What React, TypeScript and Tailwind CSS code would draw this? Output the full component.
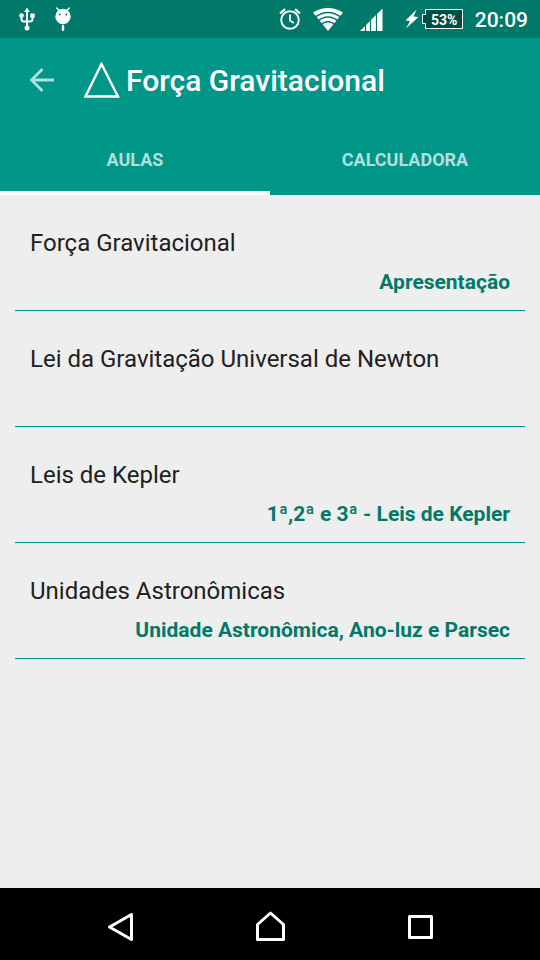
import React from "react";

type Lesson = { title: string; subtitle: string };

const lessons: Lesson[] = [
  { title: "Força Gravitacional", subtitle: "Apresentação" },
  { title: "Lei da Gravitação Universal de Newton", subtitle: "" },
  { title: "Leis de Kepler", subtitle: "1ª,2ª e 3ª - Leis de Kepler" },
  { title: "Unidades Astronômicas", subtitle: "Unidade Astronômica, Ano-luz e Parsec" },
];

function UsbIcon() {
  return (
    <svg width="16" height="24" viewBox="0 0 16 24" fill="none" stroke="#fff" strokeWidth="2" aria-hidden="true">
      <path d="M8 3V21M2.500 8V12Q2.500 14.500 5 14.500H11Q13.500 14.500 13.500 12V8" />
      <path d="M8 0.500L10.800 5H5.200Z" fill="#fff" stroke="none" />
      <circle cx="8" cy="21" r="2.500" fill="#fff" stroke="none" />
      <circle cx="2.500" cy="8.500" r="2.300" fill="#fff" stroke="none" />
      <rect x="11.300" y="6.500" width="4.400" height="4.200" fill="#fff" stroke="none" />
    </svg>
  );
}

function DroidIcon() {
  return (
    <svg width="16" height="24" viewBox="0 0 16 24" aria-hidden="true">
      <path d="M1.800 1L4.500 4M14.200 1L11.500 4" stroke="#fff" strokeWidth="1.500" strokeLinecap="round" />
      <circle cx="8" cy="9.500" r="7.700" fill="#fff" />
      <circle cx="4.700" cy="7.500" r="1" fill="#00796b" />
      <circle cx="11.300" cy="7.500" r="1" fill="#00796b" />
      <rect x="6.800" y="18" width="2.400" height="6" rx="1" fill="#fff" />
    </svg>
  );
}

function AlarmIcon() {
  return (
    <svg width="22" height="22" viewBox="0 0 22 22" fill="none" stroke="#fff" strokeWidth="1.900" aria-hidden="true">
      <circle cx="11" cy="12" r="8.800" />
      <path d="M11 6.500V12.500L14.800 15" />
      <path d="M1 5.300L6 1.200M21 5.300L16 1.200" strokeWidth="2.200" />
    </svg>
  );
}

function WifiIcon() {
  return (
    <svg width="30" height="24" viewBox="0 0 30 24" aria-hidden="true">
      <path d="M15 24L0 5.500Q15 -3.300 30 5.500Z" fill="#fff" />
      <g fill="none" stroke="#00796b" strokeWidth="1.600">
        <path d="M1.500 10.500Q15 0.500 28.500 10.500" />
        <path d="M4 14.500Q15 5.500 26 14.500" />
        <path d="M7 18.500Q15 11 23 18.500" />
      </g>
    </svg>
  );
}

function SignalIcon() {
  return (
    <svg width="23" height="23" viewBox="0 0 23 23" aria-hidden="true">
      <path d="M0 23L22.500 0.500V23Z" fill="#fff" />
      <path d="M5.500 14V23M10.500 9V23M16.500 4V23" stroke="#00796b" strokeWidth="1.200" />
    </svg>
  );
}

function Battery() {
  return (
    <div className="flex items-center">
      <svg width="14" height="20" viewBox="0 0 14 20" fill="#fff" aria-hidden="true">
        <path d="M11.500 0.500L0.500 11.500L5 12L1 19.500L13.500 8L8.500 7.500Z" />
      </svg>
      <div className="relative ml-[3px] flex h-5 w-[41px] items-center justify-center pl-1 text-[14px] font-bold leading-none">
        <svg className="absolute inset-0" width="41" height="20" viewBox="0 0 41 20" fill="#004d43" stroke="#fff" aria-hidden="true">
          <path d="M3.500 0.500H40.500V19.500H3.500V14.500H0.500V5.500H3.500Z" />
        </svg>
        <span className="relative pt-0.5">53%</span>
      </div>
    </div>
  );
}

function StatusBar() {
  return (
    <div className="flex h-[38px] items-center bg-[#00796b] pr-3 pl-[19px] text-white">
      <UsbIcon />
      <div className="ml-5">
        <DroidIcon />
      </div>
      <div className="ml-auto flex items-center">
        <AlarmIcon />
        <div className="ml-3">
          <WifiIcon />
        </div>
        <div className="ml-[17px]">
          <SignalIcon />
        </div>
        <div className="ml-[22px]">
          <Battery />
        </div>
        <span className="ml-3 pt-0.5 text-[21px] font-medium leading-6">20:09</span>
      </div>
    </div>
  );
}

function TabButton({ label, active }: { label: string; active: boolean }) {
  return (
    <button
      type="button"
      role="tab"
      aria-selected={active}
      className={
        "flex flex-1 items-center justify-center border-b-4 pt-1.5 text-[18px] font-bold text-[#b2dfdb] " +
        (active ? "border-white" : "border-transparent")
      }
    >
      {label}
    </button>
  );
}

export default function App() {
  return (
    <div className="flex min-h-screen flex-col bg-[#eeeeee] font-[Roboto,'Noto_Sans',sans-serif]">
      <StatusBar />
      <header className="bg-[#009688] text-white">
        <div className="flex h-[84px] items-center pl-7">
          <button type="button" aria-label="Voltar" className="flex size-7 items-center justify-center">
            <svg width="28" height="28" viewBox="0 0 28 28" fill="none" stroke="#b2dfdb" strokeWidth="2.800" aria-hidden="true">
              <path d="M26 14H4M14.500 3L3.500 14L14.500 25" />
            </svg>
          </button>
          <svg className="ml-7" width="36" height="36" viewBox="0 0 36 36" fill="none" stroke="#fff" strokeWidth="2.400" aria-hidden="true">
            <path d="M17.500 2L34 34.500H1.500Z" />
          </svg>
          <h1 className="ml-1.5 pt-0.5 text-[30px] font-medium leading-9">Força Gravitacional</h1>
        </div>
        <div role="tablist" className="flex h-[73px]">
          <TabButton label="AULAS" active={true} />
          <TabButton label="CALCULADORA" active={false} />
        </div>
      </header>
      <main className="flex-1 px-[15px]">
        <ul>
          {lessons.map((lesson) => (
            <li key={lesson.title} className="h-[116px] border-b border-[#009688] px-[15px] pt-8">
              <h2 className="text-[24px] leading-8 text-[#212121]">{lesson.title}</h2>
              <p className="mt-[9px] text-right text-[21px] font-bold leading-7 text-[#00796b]">{lesson.subtitle}</p>
            </li>
          ))}
        </ul>
      </main>
      <nav className="flex h-[72px] justify-center bg-black">
        <button type="button" aria-label="Voltar" className="flex w-[150px] items-center justify-center pt-1.5">
          <svg width="26" height="30" viewBox="0 0 26 30" fill="none" stroke="#fff" strokeWidth="3" strokeLinejoin="round" aria-hidden="true">
            <path d="M2.500 15L24.500 2.500V27.500Z" />
          </svg>
        </button>
        <button type="button" aria-label="Início" className="flex w-[150px] items-center justify-center pt-1.5">
          <svg width="30" height="32" viewBox="0 0 30 32" fill="none" stroke="#fff" strokeWidth="3" strokeLinejoin="round" aria-hidden="true">
            <path d="M2.500 28.500V13.500L15.500 2L28.500 13.500V28.500Z" />
          </svg>
        </button>
        <button type="button" aria-label="Recentes" className="flex w-[150px] items-center justify-center pt-1.5">
          <svg width="26" height="26" viewBox="0 0 26 26" fill="none" stroke="#fff" strokeWidth="3" strokeLinejoin="round" aria-hidden="true">
            <rect x="2.500" y="2.500" width="22" height="21" />
          </svg>
        </button>
      </nav>
    </div>
  );
}
